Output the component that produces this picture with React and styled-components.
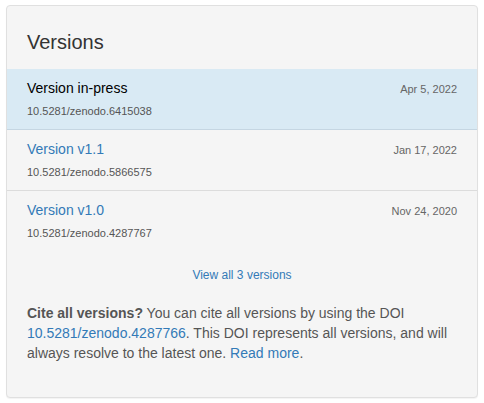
import styled, { createGlobalStyle } from "styled-components"

const GlobalStyle = createGlobalStyle`
  html, body {
    margin: 0;
    padding: 0;
    background: #ffffff;
  }
  body {
    font-family: "Liberation Sans", Arial, sans-serif;
    color: #333;
  }
`

const versions = [
  { title: "Version in-press", doi: "10.5281/zenodo.6415038", date: "Apr 5, 2022", active: true },
  { title: "Version v1.1", doi: "10.5281/zenodo.5866575", date: "Jan 17, 2022" },
  { title: "Version v1.0", doi: "10.5281/zenodo.4287767", date: "Nov 24, 2020" },
]

const App = () => {
  return (
    <>
      <GlobalStyle />
      <Page>
        <Panel>
          <Heading>Versions</Heading>
          <List>
            {versions.map((v) => (
              <Row key={v.doi} $active={v.active}>
                <RowTop>
                  <Title $active={v.active}>{v.title}</Title>
                  <Date>{v.date}</Date>
                </RowTop>
                <Doi>{v.doi}</Doi>
              </Row>
            ))}
          </List>
          <ViewAll href="#">View all 3 versions</ViewAll>
          <Cite>
            <strong>Cite all versions?</strong> You can cite all versions by using the DOI{" "}
            <a href="#">10.5281/zenodo.4287766</a>. This DOI represents all versions, and will
            always resolve to the latest one. <a href="#">Read more</a>.
          </Cite>
        </Panel>
      </Page>
    </>
  )
}

const Page = styled.div`
  padding: 5px 6px;
`

const Panel = styled.div`
  width: 472px;
  height: 393px;
  box-sizing: border-box;
  background: #f5f5f5;
  border: 1px solid #e0e0e0;
  border-radius: 4px;
  box-shadow: 0 1px 1px rgba(0, 0, 0, 0.05);
`

const Heading = styled.h2`
  margin: 0;
  padding: 25px 20px 0;
  height: 63px;
  box-sizing: border-box;
  font-size: 20px;
  font-weight: 400;
  color: #333;
`

const List = styled.div`
  display: flex;
  flex-direction: column;
`

const Row = styled.div`
  height: 61px;
  box-sizing: border-box;
  padding: 9px 20px 0;
  border-bottom: 1px solid ${(p) => (p.$active ? "#c5d6e2" : "#dcdcdc")};
  background: ${(p) => (p.$active ? "#d9eaf4" : "transparent")};

  &:last-child {
    border-bottom: none;
  }
`

const RowTop = styled.div`
  display: flex;
  justify-content: space-between;
  align-items: baseline;
`

const Title = styled.a`
  font-size: 14px;
  line-height: 20px;
  color: ${(p) => (p.$active ? "#000" : "#337ab7")};
  text-decoration: none;
`

const Date = styled.span`
  font-size: 11px;
  color: #666;
`

const Doi = styled.div`
  margin-top: 7px;
  font-size: 11px;
  color: #555;
`

const ViewAll = styled.a`
  display: block;
  margin-top: 16px;
  text-align: center;
  font-size: 12px;
  color: #337ab7;
  text-decoration: none;
`

const Cite = styled.p`
  margin: 21px 20px 0;
  font-size: 14px;
  line-height: 20px;
  color: #555;

  strong {
    color: #555;
  }

  a {
    color: #337ab7;
    text-decoration: none;
  }
`

export default App
